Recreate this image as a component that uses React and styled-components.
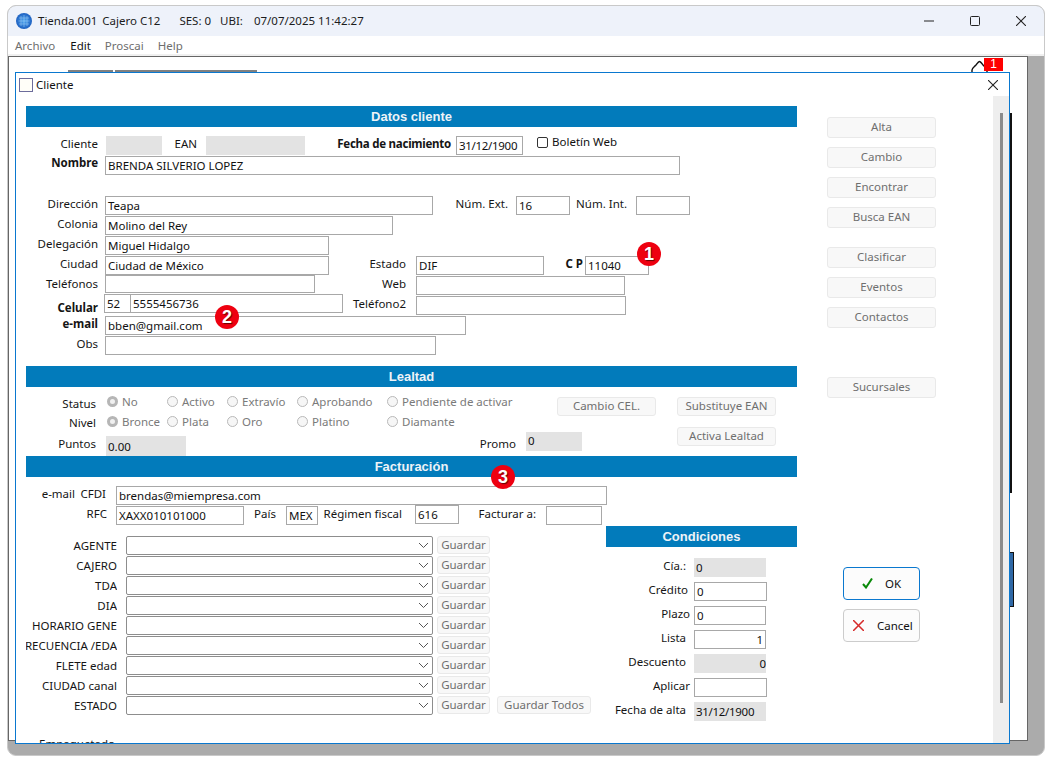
import React from "react";
import styled, { createGlobalStyle } from "styled-components";

const Global = createGlobalStyle`
  html, body { margin: 0; padding: 0; background: #fff; }
  body { font-family: "Noto Sans", "Open Sans", sans-serif; font-size: 11.5px; color: #111; }
  * { box-sizing: border-box; }
`;

const Page = styled.div`
  width: 1050px; height: 762px; padding: 5px 5px 6px 7px; background: #fff; overflow: hidden;
`;
const AppWindow = styled.div`
  position: relative; width: 1038px; height: 751px; border: 1px solid #c9c9c9; border-radius: 9px;
  overflow: hidden; background: #ababab; display: flex; flex-direction: column;
`;
const TitleBar = styled.div`
  height: 30px; flex: none; background: #eef2fa; display: flex; align-items: center; padding: 0 0 1px 8px; color: #1c1c1c; font-size: 11.5px;
`;
const TitleText = styled.span`margin-left: ${p => p.$ml || 0}px; white-space: nowrap;`;
const WinControls = styled.div`margin-left: auto; display: flex; height: 100%;`;
const WinButton = styled.div`width: 46px; display: flex; align-items: center; justify-content: center;`;
const MenuBar = styled.div`
  height: 18px; flex: none; background: #fff; display: flex; align-items: center; padding-left: 7px; font-size: 11.5px;
`;
const MenuItem = styled.span`margin-right: ${p => p.$mr}px; color: ${p => (p.$active ? "#111" : "#6e6e6e")};`;
const MenuEdge = styled.div`height: 2px; flex: none; background: #f0f0f0;`;
const ChildWindow = styled.div`
  position: relative; width: 1020px; height: 685px; flex: none; background: #fff; border: 1px solid #666;
`;
const BackTab = styled.div`
  position: absolute; top: 13px; left: ${p => p.$x}px; width: ${p => p.$w}px; height: 4px; background: #fff; border-top: 2px solid #808080;
`;
const Bell = styled.svg`position: absolute; left: 962px; top: 3px;`;
const Badge = styled.div`
  position: absolute; left: 975px; top: 1px; width: 19px; height: 13px; background: #f00; color: #fff;
  font: 12px/13px "Liberation Sans", sans-serif; text-align: center;
`;
const BackLine = styled.div`position: absolute; left: 1001px; top: 56px; width: 2px; height: 380px; background: #111;`;
const BackBar = styled.div`position: absolute; left: 1001px; top: 495px; width: 4px; height: 55px; background: #2f68a6; border: 1px solid #111; border-left: 0;`;

const Dialog = styled.div`
  position: absolute; left: 6px; top: 15px; width: 995px; height: 672px; background: #fff; border: 1px solid #0a78cf;
  display: flex; flex-direction: column; overflow: hidden;
`;
const DialogHead = styled.div`height: 23px; flex: none; display: flex; align-items: center; padding: 0 11px 0 3px; font-size: 11.5px; color: #111;`;
const HeadIcon = styled.div`width: 14px; height: 14px; background: #fffef8; border: 1px solid #6c6c9c; margin-right: 3px;`;
const CloseBtn = styled.div`margin-left: auto; display: flex;`;
const DialogBody = styled.div`flex: 1; display: flex; padding: 10px 0 0 10px; min-height: 0; overflow: hidden;`;
const ScrollTrack = styled.div`position: absolute; right: 0; top: 23px; bottom: 0; width: 16px; background: #eeeeee;`;
const ScrollThumb = styled.div`position: absolute; left: 7px; top: 17px; width: 3px; height: 590px; background: #8c8c8c;`;
const FormCol = styled.div`width: 771px; flex: none;`;
const ActionCol = styled.div`width: 109px; margin-left: 30px; padding-top: 11px; flex: none; display: flex; flex-direction: column;`;
const Section = styled.div`
  height: 21px; margin-top: ${p => p.$mt || 0}px; background: #027bbb; color: #eef3f7; font: bold 13px/21px "Liberation Sans", sans-serif; text-align: center;
`;
const Row = styled.div`
  display: flex; align-items: flex-start; height: ${p => p.$h || 20}px; margin-top: ${p => p.$mt || 0}px; white-space: nowrap;
`;
const Label = styled.div`
  display: flex; justify-content: flex-end; flex: none; width: ${p => p.$w}px; margin-left: ${p => p.$ml || 0}px; margin-top: ${p => p.$dy || 0}px;
  line-height: 15px; font-weight: ${p => (p.$bold ? 700 : 400)}; color: #151515; white-space: nowrap;
  ${p => p.$tight && "letter-spacing: -0.25px;"}
  ${p => p.$clip && "overflow: hidden;"}
`;
const Field = styled.div`
  flex: none; width: ${p => p.$w}px; height: ${p => p.$h || 19}px; margin-left: ${p => p.$ml || 0}px; margin-top: ${p => p.$mt || 0}px;
  border: 1px solid #a8a8a8; background: #fff; padding: 1px 2px 0; line-height: 16px; color: #111; text-align: ${p => p.$right ? "right" : "left"};
  overflow: hidden; ${p => p.$tight && "letter-spacing: -0.3px;"}
`;
const GrayField = styled(Field)`
  border: 0; background: #e3e3e3; padding: ${p => p.$top ?? 2}px 0 0 2px;
`;
const Check = styled.div`flex: none; width: 11px; height: 11px; margin: 1px 0 0 ${p => p.$ml}px; border: 1px solid #333; border-radius: 2px; background: #fff;`;
const CheckText = styled.span`margin-left: 4px; line-height: 12px;`;

const RadioCell = styled.div`flex: none; width: ${p => p.$w}px; height: 19px; display: flex; align-items: center; color: #7a7a7a;`;
const RadioDot = styled.span`
  flex: none; width: 11px; height: 11px; border-radius: 50%; margin-right: 4px;
  border: ${p => (p.$on ? "3px solid #b6b6b6" : "1px solid #b9b9b9")}; background: ${p => (p.$on ? "#f0f0f0" : "#f6f6f6")};
`;
const GrayButton = styled.div`
  flex: none; width: ${p => p.$w}px; height: ${p => p.$h || 19}px; margin-left: ${p => p.$ml || 0}px; margin-top: ${p => p.$mt || 0}px;
  background: #f8f8f8; border: 1px solid #e9e9e9; border-radius: 3px; color: #6f6f6f; text-align: center; line-height: ${p => (p.$h || 19) - 3}px;
`;
const SideButton = styled(GrayButton)`margin-left: 0;`;
const ActionButton = styled.div`
  width: 77px; height: 33px; margin: ${p => p.$mt}px 0 0 16px; flex: none; display: flex; align-items: center; background: #fcfcfc;
  border: 1px solid ${p => (p.$primary ? "#0a78cf" : "#cccccc")}; border-radius: 4px; padding-left: ${p => p.$pad}px; color: #111; font-size: 11.5px;
`;
const ActionLabel = styled.span`margin-left: ${p => p.$ml}px;`;
const LowerRow = styled.div`display: flex;`;
const SelectCol = styled.div`width: 580px; flex: none; padding-top: 10px;`;
const CondCol = styled.div`width: 191px; flex: none;`;
const CondBody = styled.div`padding-top: 11px;`;
const Select = styled.div`
  flex: none; width: 307px; height: 19px; margin-left: 9px; border: 1px solid #8d8d8d; border-radius: 2px; background: #fff;
  display: flex; align-items: center; justify-content: flex-end; padding-right: 3px;
`;
const Pin = styled.div`
  position: absolute; left: ${p => p.$x}px; top: ${p => p.$y}px; width: 24px; height: 24px; border-radius: 50%; background: #ee0010; color: #fff;
  font: bold 18px/24px "Liberation Sans", sans-serif; text-align: center; text-shadow: 1px 1px 1px #600;
`;

const Chevron = () => (
  <svg width="11" height="7" viewBox="0 0 11 7"><path d="M1 1l4.5 4.5L10 1" fill="none" stroke="#555" strokeWidth="1" /></svg>
);
const Globe = () => (
  <svg width="16" height="16" viewBox="0 0 16 16">
    <defs><radialGradient id="g" cx="50%" cy="50%" r="60%"><stop offset="0" stopColor="#4fa6f0" /><stop offset="1" stopColor="#1554b8" /></radialGradient></defs>
    <circle cx="8" cy="8" r="8" fill="url(#g)" />
    <path d="M3 5h10M2.500 8h11M3 11h10M5 3v10M8 2v12M11 3v10" stroke="#a9d4f8" strokeWidth=".6" opacity=".8" />
  </svg>
);
const Cross = ({ s = 10, c = "#222", w = 1.1 }) => (
  <svg width={s} height={s} viewBox="0 0 10 10"><path d="M0 0l10 10M10 0L0 10" stroke={c} strokeWidth={w} fill="none" /></svg>
);

const radios = (items, on) => items.map(([t, w], i) => (
  <RadioCell key={t} $w={w}><RadioDot $on={i === on} />{t}</RadioCell>
));

const selects = ["AGENTE", "CAJERO", "TDA", "DIA", "HORARIO GENE", "FRECUENCIA /EDA", "FLETE edad", "CIUDAD canal", "ESTADO"];

export default function App() {
  return (
    <Page>
      <Global />
      <AppWindow>
        <TitleBar>
          <Globe />
          <TitleText $ml={6}>Tienda.001</TitleText>
          <TitleText $ml={5}>Cajero C12</TitleText>
          <TitleText $ml={19}>SES: 0</TitleText>
          <TitleText $ml={9}>UBI:</TitleText>
          <TitleText $ml={11}>07/07/2025 11:42:27</TitleText>
          <WinControls>
            <WinButton><svg width="10" height="10" viewBox="0 0 10 10"><path d="M0 5h10" stroke="#222" strokeWidth="1" /></svg></WinButton>
            <WinButton><svg width="10" height="10" viewBox="0 0 10 10"><rect x=".5" y=".5" width="9" height="9" rx="1" fill="none" stroke="#222" /></svg></WinButton>
            <WinButton><Cross /></WinButton>
          </WinControls>
        </TitleBar>
        <MenuBar>
          <MenuItem $mr={15}>Archivo</MenuItem>
          <MenuItem $mr={14} $active>Edit</MenuItem>
          <MenuItem $mr={14}>Proscai</MenuItem>
          <MenuItem $mr={0}>Help</MenuItem>
        </MenuBar>
        <MenuEdge />
        <ChildWindow>
          <BackTab $x={59} $w={45} />
          <BackTab $x={106} $w={142} />
          <Bell width="18" height="14" viewBox="0 0 18 14"><path d="M1 13v-3c0-2 2-3 4-5 1.500-2 2.500-3.500 3.500-3.500S10.500 3 12 5c2 2 4 3 4 5v3" fill="none" stroke="#111" strokeWidth="1.4" /></Bell>
          <Badge>1</Badge>
          <BackLine />
          <BackBar />
          <Dialog>
            <DialogHead>
              <HeadIcon />Cliente
              <CloseBtn><Cross /></CloseBtn>
            </DialogHead>
            <ScrollTrack><ScrollThumb /></ScrollTrack>
            <DialogBody>
              <FormCol>
                <Section>Datos cliente</Section>
                <Row $mt={9}>
                  <Label $w={72}>Cliente</Label>
                  <GrayField $w={56} $ml={8} />
                  <Label $w={24} $ml={11}>EAN</Label>
                  <GrayField $w={99} $ml={9} />
                  <Label $w={114} $ml={32} $bold $tight>Fecha de nacimiento</Label>
                  <Field $w={67} $ml={5} $tight>31/12/1900</Field>
                  <Check $ml={14} />
                  <CheckText>Boletín Web</CheckText>
                </Row>
                <Row>
                  <Label $w={72} $bold $dy={-1}>Nombre</Label>
                  <Field $w={575} $ml={7}>BRENDA SILVERIO LOPEZ</Field>
                </Row>
                <Row $mt={20}>
                  <Label $w={72}>Dirección</Label>
                  <Field $w={328} $ml={7}>Teapa</Field>
                  <Label $w={51} $ml={24}>Núm. Ext.</Label>
                  <Field $w={54} $ml={8}>16</Field>
                  <Label $w={50} $ml={7}>Núm. Int.</Label>
                  <Field $w={54} $ml={9} />
                </Row>
                <Row>
                  <Label $w={72}>Colonia</Label>
                  <Field $w={288} $ml={7}>Molino del Rey</Field>
                </Row>
                <Row>
                  <Label $w={72}>Delegación</Label>
                  <Field $w={224} $ml={7}>Miguel Hidalgo</Field>
                </Row>
                <Row>
                  <Label $w={72}>Ciudad</Label>
                  <Field $w={224} $ml={7}>Ciudad de México</Field>
                  <Label $w={77}>Estado</Label>
                  <Field $w={128} $ml={10}>DIF</Field>
                  <Label $w={39} $bold>C P</Label>
                  <Field $w={64} $ml={2}>11040</Field>
                </Row>
                <Row>
                  <Label $w={72}>Teléfonos</Label>
                  <Field $w={210} $ml={7} $h={18} $mt={-1} />
                  <Label $w={91}>Web</Label>
                  <Field $w={209} $ml={10} />
                </Row>
                <Row>
                  <Label $w={72} $bold $dy={4}>Celular</Label>
                  <Field $w={27} $ml={6} $mt={-2}>52</Field>
                  <Field $w={213} $ml={-1} $mt={-2}>5555456736</Field>
                  <Label $w={63}>Teléfono2</Label>
                  <Field $w={210} $ml={10} />
                </Row>
                <Row>
                  <Label $w={72} $bold>e-mail</Label>
                  <Field $w={361} $ml={7}>bben@gmail.com</Field>
                </Row>
                <Row>
                  <Label $w={72}>Obs</Label>
                  <Field $w={331} $ml={7} />
                </Row>

                <Section $mt={10}>Lealtad</Section>
                <Row $mt={5}>
                  <Label $w={70} $dy={4}>Status</Label>
                  <Label $w={11} />
                  {radios([["No", 60], ["Activo", 60], ["Extravío", 70], ["Aprobando", 90], ["Pendiente de activar", 170]], 0)}
                  <GrayButton $w={99} $mt={5}>Cambio CEL.</GrayButton>
                  <GrayButton $w={99} $ml={21} $mt={5}>Substituye EAN</GrayButton>
                </Row>
                <Row>
                  <Label $w={70} $dy={3}>Nivel</Label>
                  <Label $w={11} />
                  {radios([["Bronce", 60], ["Plata", 60], ["Oro", 70], ["Platino", 90], ["Diamante", 170]], 0)}
                </Row>
                <Row $h={24}>
                  <Label $w={70} $dy={4}>Puntos</Label>
                  <GrayField $w={80} $ml={10} $h={20} $mt={4} $top={3}>0.00</GrayField>
                  <Label $w={36} $ml={294} $dy={4}>Promo</Label>
                  <GrayField $w={56} $ml={10} $top={1}>0</GrayField>
                  <GrayButton $w={99} $ml={95} $mt={-5}>Activa Lealtad</GrayButton>
                </Row>

                <Section>Facturación</Section>
                <Row $mt={9}>
                  <Label $w={33} $ml={16}>e-mail</Label>
                  <Label $w={25} $ml={6}>CFDI</Label>
                  <Field $w={491} $ml={10}>brendas@miempresa.com</Field>
                </Row>
                <Row>
                  <Label $w={81}>RFC</Label>
                  <Field $w={128} $ml={9}>XAXX010101000</Field>
                  <Label $w={21} $ml={11}>País</Label>
                  <Field $w={32} $ml={10}>MEX</Field>
                  <Label $w={77} $ml={7}>Régimen fiscal</Label>
                  <Field $w={44} $ml={13} $mt={-1}>616</Field>
                  <Label $w={55} $ml={22}>Facturar a:</Label>
                  <Field $w={56} $ml={10} />
                </Row>
                <LowerRow>
                  <SelectCol>
                    {selects.map((s, i) => (
                      <Row key={s}>
                        <Label $w={91} $clip $dy={2}>{s}</Label>
                        <Select><Chevron /></Select>
                        <GrayButton $w={53} $ml={4} $h={18}>Guardar</GrayButton>
                        {i === 8 && <GrayButton $w={94} $ml={7} $h={18}>Guardar Todos</GrayButton>}
                      </Row>
                    ))}
                    <Row $mt={20}>
                      <Label $w={89}>Empaquetado</Label>
                    </Row>
                  </SelectCol>
                  <CondCol>
                    <Section>Condiciones</Section>
                    <CondBody>
                      <Row $h={24}><Label $w={80}>Cía.:</Label><GrayField $w={72} $ml={8}>0</GrayField></Row>
                      <Row $h={24}><Label $w={82}>Crédito</Label><Field $w={73} $ml={6}>0</Field></Row>
                      <Row $h={24}><Label $w={84}>Plazo</Label><Field $w={72} $ml={4}>0</Field></Row>
                      <Row $h={24}><Label $w={80}>Lista</Label><Field $w={72} $ml={8} $right>1</Field></Row>
                      <Row $h={24}><Label $w={80}>Descuento</Label><GrayField $w={72} $ml={8} $right>0</GrayField></Row>
                      <Row $h={24}><Label $w={84}>Aplicar</Label><Field $w={73} $ml={4} /></Row>
                      <Row $h={24}><Label $w={80}>Fecha de alta</Label><GrayField $w={72} $ml={8} $tight>31/12/1900</GrayField></Row>
                    </CondBody>
                  </CondCol>
                </LowerRow>
              </FormCol>
              <ActionCol>
                <SideButton $w={109} $h={21}>Alta</SideButton>
                <SideButton $w={109} $h={21} $mt={9}>Cambio</SideButton>
                <SideButton $w={109} $h={21} $mt={9}>Encontrar</SideButton>
                <SideButton $w={109} $h={21} $mt={9}>Busca EAN</SideButton>
                <SideButton $w={109} $h={21} $mt={19}>Clasificar</SideButton>
                <SideButton $w={109} $h={21} $mt={9}>Eventos</SideButton>
                <SideButton $w={109} $h={21} $mt={9}>Contactos</SideButton>
                <SideButton $w={109} $h={21} $mt={49}>Sucursales</SideButton>
                <ActionButton $primary $mt={169} $pad={18}>
                  <svg width="11" height="11" viewBox="0 0 11 11"><path d="M1 6l3 3.500L10 .5" fill="none" stroke="#0a8a0a" strokeWidth="2" /></svg>
                  <ActionLabel $ml={12}>OK</ActionLabel>
                </ActionButton>
                <ActionButton $mt={9} $pad={9}>
                  <Cross s={11} c="#d62a2a" w={1.4} />
                  <ActionLabel $ml={13}>Cancel</ActionLabel>
                </ActionButton>
              </ActionCol>
            </DialogBody>
            <Pin $x={621} $y={169}>1</Pin>
            <Pin $x={199} $y={232}>2</Pin>
            <Pin $x={475} $y={392}>3</Pin>
          </Dialog>
        </ChildWindow>
      </AppWindow>
    </Page>
  );
}
